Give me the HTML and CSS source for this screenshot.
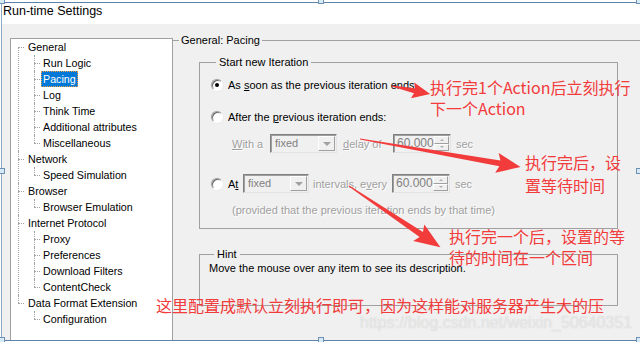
FILE: index.html
```html
<!DOCTYPE html>
<html>

<head>
  <meta charset="UTF-8">
  <title>Run-time Settings</title>
  <link rel="stylesheet" href="styles.css">
</head>

<body>
  <div class="page">
    <div class="ruler"></div>
    <div class="window">
      <div class="title">Run-time Settings</div>
      <div class="body">
        <ul class="tree">
          <li><span class="label">General</span>
            <ul class="sub">
              <li><span class="label">Run Logic</span></li>
              <li><span class="label is-selected">Pacing</span></li>
              <li><span class="label">Log</span></li>
              <li><span class="label">Think Time</span></li>
              <li><span class="label">Additional attributes</span></li>
              <li><span class="label">Miscellaneous</span></li>
            </ul>
          </li>
          <li><span class="label">Network</span>
            <ul class="sub">
              <li><span class="label">Speed Simulation</span></li>
            </ul>
          </li>
          <li><span class="label">Browser</span>
            <ul class="sub">
              <li><span class="label">Browser Emulation</span></li>
            </ul>
          </li>
          <li><span class="label">Internet Protocol</span>
            <ul class="sub">
              <li><span class="label">Proxy</span></li>
              <li><span class="label">Preferences</span></li>
              <li><span class="label">Download Filters</span></li>
              <li><span class="label">ContentCheck</span></li>
            </ul>
          </li>
          <li><span class="label">Data Format Extension</span>
            <ul class="sub">
              <li><span class="label">Configuration</span></li>
            </ul>
          </li>
        </ul>

        <fieldset class="group group-main">
          <legend class="legend-main">General: Pacing</legend>

          <fieldset class="group group-iter">
            <legend>Start new Iteration</legend>
            <div class="opt opt-first">
              <span class="radio radio-on"></span>
              <span class="opt-text">As <u>s</u>oon as the previous iteration ends</span>
            </div>
            <div class="opt opt-second">
              <span class="radio"></span>
              <span class="opt-text">After the <u>p</u>revious iteration ends:</span>
            </div>
            <div class="opt opt-delay is-disabled">
              <span class="lbl lbl-with"><u>W</u>ith a</span>
              <span class="combo"><span class="combo-text">fixed</span><span class="combo-btn"></span></span>
              <span class="lbl lbl-delay"><u>d</u>elay of</span>
              <span class="spin"><span class="spin-text">60.000</span><span class="spin-btns"><span class="spin-up"></span><span class="spin-down"></span></span></span>
              <span class="lbl lbl-sec">sec</span>
            </div>
            <div class="opt opt-at">
              <span class="radio"></span>
              <span class="opt-text lbl-at">A<u>t</u></span>
              <span class="combo combo-at"><span class="combo-text">fixed</span><span class="combo-btn"></span></span>
              <span class="lbl lbl-every is-disabled">intervals, e<u>v</u>ery</span>
              <span class="spin"><span class="spin-text">60.000</span><span class="spin-btns"><span class="spin-up"></span><span class="spin-down"></span></span></span>
              <span class="lbl lbl-sec is-disabled">sec</span>
            </div>
            <div class="opt opt-note is-disabled">(provided that the previous iteration ends by that time)</div>
          </fieldset>

          <fieldset class="group group-hint">
            <legend>Hint</legend>
            <p class="hint-text">Move the mouse over any item to see its description.</p>
          </fieldset>
        </fieldset>
      </div>
    </div>

    <!-- 选择框的控制点 -->
    <span class="handle handle-tl"></span>
    <span class="handle handle-tm"></span>
    <span class="handle handle-tr"></span>
    <span class="handle handle-ml"></span>
    <span class="handle handle-mr"></span>
    <span class="handle handle-bl"></span>
    <span class="handle handle-bm"></span>
    <span class="handle handle-br"></span>

    <!-- 标注 -->
    <svg class="arrows" width="640" height="342" viewBox="0 0 640 342">
      <g fill="#f23b3b">
        <polygon transform="translate(392 86) rotate(11.9)" points="0,-0.5 23,-2.5 21,-8 39,0 21,8 23,2.5 0,0.5"/>
        <polygon transform="translate(360 139) rotate(9.9)" points="0,-0.5 142,-3 139,-10 163,0 139,10 142,3 0,0.5"/>
        <polygon transform="translate(349 186) rotate(33.8)" points="0,-0.5 87,-3 84,-10 110,0 84,10 87,3 0,0.5"/>
      </g>
    </svg>
    <div class="note note-1"><div>执行完1个Action后立刻执行</div><div>下一个Action</div></div>
    <div class="note note-2"><div>执行完后，设</div><div>置等待时间</div></div>
    <div class="note note-3"><div>执行完一个后，设置的等</div><div>待的时间在一个区间</div></div>
    <div class="note note-4">这里配置成默认立刻执行即可，因为这样能对服务器产生大的压</div>
    <div class="watermark">https://blog.csdn.net/weixin_50640351</div>
  </div>
</body>

</html>
```

FILE: styles.css
```css
html,
body {
  margin: 0;
  padding: 0;
  background: #fff;
}

.page {
  position: relative;
  width: 640px;
  height: 342px;
  overflow: hidden;
  font-family: "Liberation Sans", Arial, sans-serif;
  font-size: 11px;
  color: #000;
}

.ruler {
  height: 2px;
  background: #fff;
}

.window {
  display: flex;
  flex-direction: column;
  box-sizing: border-box;
  height: 339px;
  margin-left: 1px;
  border-top: 1px solid #5f82aa;
  border-left: 1px solid #8fa9c6;
  border-bottom: 1px solid #5f82aa;
  background: #f0f0f0;
}

.title {
  height: 21px;
  padding-left: 1px;
  font-size: 12.5px;
  line-height: 16px;
  background: #fff;
}

.body {
  display: flex;
  flex: 1;
  padding: 8px 0 0 8px;
  overflow: hidden;
}

/* 左侧树 */
.tree {
  box-sizing: border-box;
  width: 163px;
  flex: none;
  margin: 6px 0 0;
  padding: 0;
  list-style: none;
  font-size: 10.7px;
  background: #fff;
  border: 1px solid #a0a0a0;
  border-bottom: 0;
}

.tree li {
  position: relative;
  padding-left: 15px;
}

.tree > li::before,
.tree > li::after,
.sub > li::before,
.sub > li::after {
  position: absolute;
  content: '';
}

.tree > li::before {
  left: 7px;
  top: 8px;
  width: 6px;
  border-top: 1px dotted #a0a0a0;
}

.tree > li::after {
  left: 7px;
  top: 0;
  bottom: 0;
  border-left: 1px dotted #a0a0a0;
}

.tree > li:first-child::after {
  top: 8px;
}

.tree > li:last-child::after {
  bottom: auto;
  height: 8px;
}

.sub {
  margin: 0;
  padding: 0;
  list-style: none;
}

.sub > li::before {
  left: 8px;
  top: 8px;
  width: 6px;
  border-top: 1px dotted #a0a0a0;
}

.sub > li::after {
  left: 8px;
  top: 0;
  bottom: 0;
  border-left: 1px dotted #a0a0a0;
}

.sub > li:last-child::after {
  bottom: auto;
  height: 8px;
}

.label {
  display: inline-block;
  padding: 0 2px;
  line-height: 16px;
  white-space: nowrap;
}

.is-selected {
  color: #fff;
  background: #0078d7;
  outline: 1px dotted #f0a040;
  outline-offset: -1px;
}

/* 右侧分组框 */
.group {
  min-width: 0;
  margin: 0;
  padding: 0;
  border: 1px solid #a0a0a0;
}

.group legend {
  margin-left: 5px;
  padding: 0 3px;
  line-height: 16px;
}

.group-main {
  flex: 1;
  margin: 0 -12px 0 -1px;
  border-bottom: 0;
}

.group-main .legend-main {
  margin-left: 6px;
  padding: 0 2px;
}

.group-iter {
  display: flex;
  flex-direction: column;
  width: 419px;
  box-sizing: border-box;
  margin: 6px 0 0 26px;
  padding: 0 0 10px 11px;
}

.group-hint {
  width: 419px;
  box-sizing: border-box;
  margin: 17px 0 0 26px;
  padding: 0 0 29px 9px;
}

.hint-text {
  margin: -2px 0 0;
  line-height: 16px;
}

.opt {
  display: flex;
  align-items: center;
  height: 16px;
  white-space: nowrap;
}

.opt-first {
  margin-top: 7px;
}

.opt-second {
  margin-top: 16px;
}

.opt-delay {
  height: 19px;
  margin-top: 9px;
  padding-left: 21px;
}

.opt-at {
  height: 19px;
  margin-top: 21px;
}

.opt-note {
  margin-top: 9px;
  padding-left: 21px;
}

.is-disabled {
  color: #a0a0a0;
  text-shadow: 1px 1px 0 #fff;
}

.radio {
  display: flex;
  align-items: center;
  justify-content: center;
  box-sizing: border-box;
  width: 12px;
  height: 12px;
  margin-right: 5px;
  background: #fff;
  border: 1px solid;
  border-color: #a0a0a0 #fff #fff #a0a0a0;
  border-radius: 50%;
  box-shadow: inset 1px 1px 0 #696969, 0 0 0 0.5px #e3e3e3;
}

.radio-on::after {
  content: '';
  width: 4px;
  height: 4px;
  background: #000;
  border-radius: 50%;
}

.lbl {
  display: inline-block;
}

.lbl-with {
  width: 38px;
}

.lbl-delay {
  width: 50px;
  margin-left: 6px;
}

.lbl-at {
  width: 15px;
}

.lbl-every {
  width: 79px;
  margin-left: 4px;
}

.lbl-sec {
  margin-left: 5px;
}

.combo {
  display: flex;
  box-sizing: border-box;
  width: 67px;
  height: 19px;
  padding: 1px;
  background: #f0f0f0;
  border: 1px solid;
  border-color: #808080 #e3e3e3 #e3e3e3 #808080;
  box-shadow: inset 1px 1px 0 #a0a0a0;
  text-shadow: none;
}

.combo-at {
  width: 66px;
}

.combo-text {
  flex: 1;
  padding-left: 3px;
  color: #808080;
  line-height: 15px;
}

.combo-btn {
  display: flex;
  align-items: center;
  justify-content: center;
  box-sizing: border-box;
  width: 17px;
  background: #f0f0f0;
  border: 1px solid;
  border-color: #fff #a0a0a0 #a0a0a0 #fff;
}

.combo-btn::after {
  content: '';
  border-top: 4px solid #a0a0a0;
  border-left: 4px solid transparent;
  border-right: 4px solid transparent;
}

.spin {
  display: flex;
  box-sizing: border-box;
  width: 58px;
  height: 19px;
  padding: 1px;
  background: #f0f0f0;
  border: 1px solid;
  border-color: #808080 #e3e3e3 #e3e3e3 #808080;
  box-shadow: inset 1px 1px 0 #a0a0a0;
  text-shadow: none;
}

.spin-text {
  flex: 1;
  padding-left: 2px;
  color: #808080;
  font-size: 12px;
  line-height: 15px;
}

.spin-btns {
  display: flex;
  flex-direction: column;
  width: 15px;
}

.spin-up,
.spin-down {
  display: flex;
  flex: 1;
  align-items: center;
  justify-content: center;
  box-sizing: border-box;
  border: 1px solid;
  border-color: #fff #a0a0a0 #a0a0a0 #fff;
}

.spin-up::after {
  content: '';
  border-bottom: 2px solid #b0b0b0;
  border-left: 2px solid transparent;
  border-right: 2px solid transparent;
}

.spin-down::after {
  content: '';
  border-top: 2px solid #b0b0b0;
  border-left: 2px solid transparent;
  border-right: 2px solid transparent;
}

/* 控制点 */
.handle {
  position: absolute;
  box-sizing: border-box;
  width: 6px;
  height: 6px;
  background: #d6eaf8;
  border: 1px solid #6f8fb3;
}

.handle-tl { left: -1px; top: -2px; }
.handle-tm { left: 318px; top: -2px; }
.handle-tr { left: 636px; top: -2px; }
.handle-ml { left: -1px; top: 168px; }
.handle-mr { left: 636px; top: 168px; }
.handle-bl { left: -1px; top: 337px; }
.handle-bm { left: 318px; top: 337px; }
.handle-br { left: 636px; top: 337px; }

/* 标注 */
.arrows {
  position: absolute;
  left: 0;
  top: 0;
}

.note {
  position: absolute;
  font-family: "Noto Sans CJK SC", sans-serif;
  font-size: 16px;
  line-height: 21px;
  color: #f23b3b;
  white-space: nowrap;
}

.note-1 {
  left: 430px;
  top: 77px;
}

.note-2 {
  left: 525px;
  top: 151px;
  line-height: 23px;
}

.note-3 {
  left: 449px;
  top: 226px;
}

.note-4 {
  left: 156px;
  top: 296px;
  line-height: 18px;
}

.watermark {
  position: absolute;
  left: 360px;
  top: 314px;
  font-family: "Liberation Sans", Arial, sans-serif;
  font-size: 16px;
  line-height: 18px;
  color: rgba(255, 255, 255, 0.5);
  text-shadow: 0 0 1px rgba(150, 150, 150, 0.45);
  white-space: nowrap;
}
```
